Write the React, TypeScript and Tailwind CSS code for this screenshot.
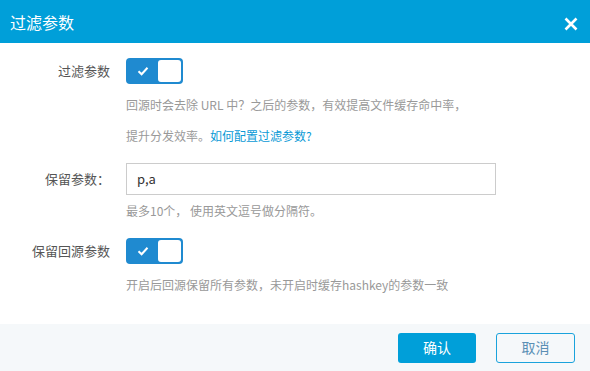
const font = { fontFamily: '"Noto Sans CJK SC", "Liberation Sans", sans-serif' };

const Toggle = () => (
  <div className="flex h-[26px] w-[57px] items-center rounded-[4px] bg-[#1f8ad0] p-[2px]">
    <div className="flex flex-1 items-center justify-center">
      <svg width="12" height="10" viewBox="0 0 12 10">
        <path d="M1.5 5.2 L4.6 8.2 L10.5 1.8" fill="none" stroke="#fff" strokeWidth="2" />
      </svg>
    </div>
    <div className="h-[22px] w-[23px] rounded-[3px] bg-white" />
  </div>
);

const Row = ({ label, children }: { label: string; children: React.ReactNode }) => (
  <div className="flex items-center">
    <div className="w-[110px] pr-0 text-right text-[13px] text-[#555]">{label}</div>
    <div className="ml-[16px]">{children}</div>
  </div>
);

export default function App() {
  return (
    <div className="flex h-[371px] w-[590px] flex-col bg-white" style={font}>
      <div className="flex h-[43px] items-center justify-between bg-[#009fd9] pl-[10px] pr-[12px]">
        <div className="text-[16px] text-white">过滤参数</div>
        <svg width="14" height="14" viewBox="0 0 14 14" className="mt-[5px]">
          <path d="M1.5 1.5 L12.5 12.5 M12.5 1.5 L1.5 12.5" stroke="#fff" strokeWidth="2.6" />
        </svg>
      </div>

      <div className="flex-1 pt-[15px]">
        <Row label="过滤参数">
          <Toggle />
        </Row>
        <div className="ml-[126px] mt-[5px] text-[12px] leading-[31px] text-[#999]">
          <div>回源时会去除 URL 中？之后的参数，有效提高文件缓存命中率，</div>
          <div>
            提升分发效率。<span className="text-[#0a9ad6]">如何配置过滤参数?</span>
          </div>
        </div>

        <div className="mt-[12px]">
          <Row label="保留参数：">
            <div className="flex h-[32px] w-[370px] items-center border border-[#ccc] px-[10px] text-[13px] text-[#333]">
              p,a
            </div>
          </Row>
        </div>
        <div className="ml-[126px] mt-[7px] text-[12px] text-[#999]">最多10个， 使用英文逗号做分隔符。</div>

        <div className="mt-[18px]">
          <Row label="保留回源参数">
            <Toggle />
          </Row>
        </div>
        <div className="ml-[126px] mt-[12px] text-[12px] text-[#999]">
          开启后回源保留所有参数，未开启时缓存hashkey的参数一致
        </div>
      </div>

      <div className="flex h-[47px] items-center justify-end gap-[20px] bg-[#f5f8fa] pr-[15px]">
        <button className="h-[30px] w-[78px] rounded-[3px] bg-[#009fd9] text-[14px] text-white">确认</button>
        <button className="h-[30px] w-[79px] rounded-[3px] border border-[#1aa3dc] bg-transparent text-[14px] text-[#5a8fb5]">
          取消
        </button>
      </div>
    </div>
  );
}
